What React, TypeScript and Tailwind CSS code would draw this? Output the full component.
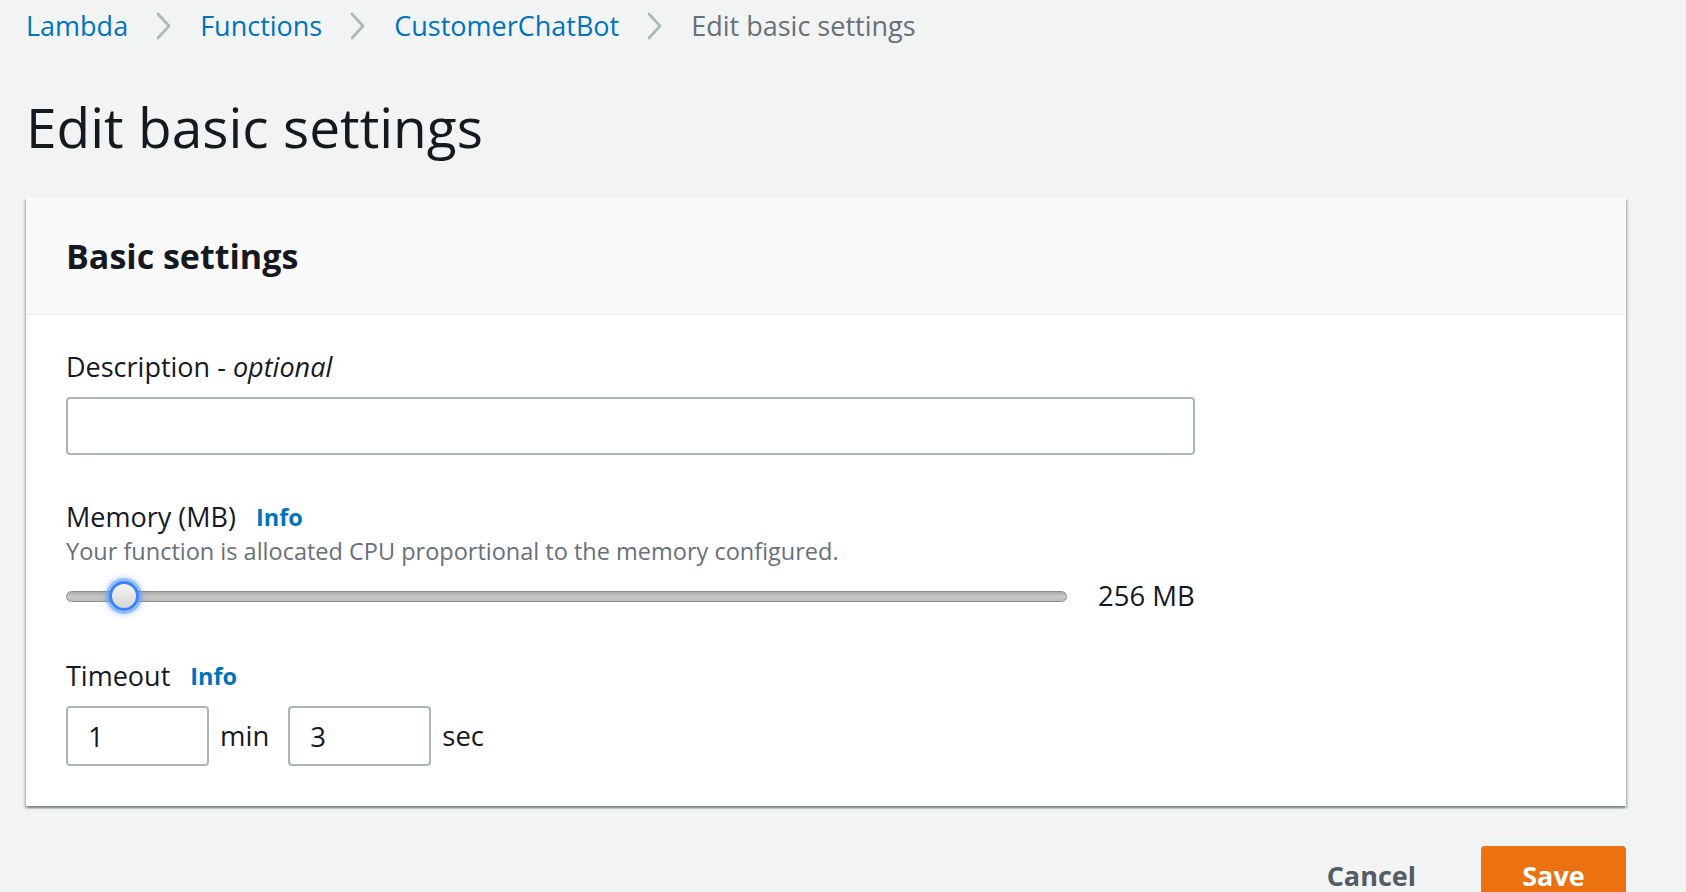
import { useState } from "react";

const font = { fontFamily: '"Open Sans", "Noto Sans", sans-serif' };

function Chevron() {
	return (
		<svg width="16" height="28" viewBox="0 0 16 28" className="mx-[28px] shrink-0">
			<polyline
				points="2,2 13,14 2,26"
				fill="none"
				stroke="#aab7b8"
				strokeWidth="2.6"
				strokeLinecap="round"
				strokeLinejoin="round"
			/>
		</svg>
	);
}

function InfoLink() {
	return <a className="ml-[20px] text-[23.5px] font-bold text-[#0073bb] cursor-pointer">Info</a>;
}

function MemorySlider({ value }: { value: number }) {
	return (
		<div className="flex items-center h-[40px]">
			<div className="relative w-[1001px] h-[40px] flex items-center">
				{/* Track */}
				<div className="w-full h-[11px] rounded-full border border-[#8e8e8e] bg-gradient-to-b from-[#a9a9a9] via-[#c9c9c9] to-[#bdbdbd]" />
				{/* Thumb */}
				<div className="absolute left-[43px] top-[5px] w-[30px] h-[30px] rounded-full border-[3px] border-[#3b82f6] bg-gradient-to-b from-[#f4f4f4] to-[#d6d6d6] shadow-[0_0_0_3px_rgba(96,165,250,0.55),0_0_7px_3px_rgba(59,130,246,0.4)]" />
			</div>
			<span className="ml-[31px] text-[27.5px] text-[#16191f]">{value} MB</span>
		</div>
	);
}

export default function App() {
	const [description, setDescription] = useState("");
	const [minutes, setMinutes] = useState("1");
	const [seconds, setSeconds] = useState("3");

	return (
		<div className="min-h-[892px] bg-[#f2f3f3] pl-[26px] pr-[60px] overflow-hidden" style={font}>
			{/* Breadcrumbs */}
			<nav className="flex items-center h-[52px] text-[27px]">
				<a className="text-[#0073bb]">Lambda</a>
				<Chevron />
				<a className="text-[#0073bb]">Functions</a>
				<Chevron />
				<a className="text-[#0073bb]">CustomerChatBot</a>
				<Chevron />
				<span className="text-[#687078]">Edit basic settings</span>
			</nav>

			<h1 className="mt-[44px] mb-[40px] text-[55px] leading-[62px] text-[#16191f]">Edit basic settings</h1>

			{/* Card */}
			<div className="bg-white shadow-[0_2px_2px_0_rgba(0,28,36,0.35),2px_2px_2px_0_rgba(0,28,36,0.15),-2px_2px_2px_0_rgba(0,28,36,0.15)]">
				<div className="h-[117px] flex items-center px-[40px] bg-[#fafafa] border-b border-[#eaeded]">
					<h2 className="text-[34px] font-bold text-[#16191f]">Basic settings</h2>
				</div>

				<div className="px-[40px] pt-[34px] pb-[40px]">
					{/* Description */}
					<label className="block text-[27px] leading-[36px] text-[#16191f]">
						Description - <i>optional</i>
					</label>
					<input
						value={description}
						onChange={(e) => setDescription(e.target.value)}
						className="mt-[12px] block w-[1129px] h-[58px] rounded-[4px] border-2 border-[#aab7b8] bg-white px-[20px] text-[27px] outline-none"
					/>

					{/* Memory */}
					<div className="mt-[44px] flex items-center text-[27px] leading-[36px] text-[#16191f]">
						Memory (MB)
						<InfoLink />
					</div>
					<p className="text-[23.5px] leading-[32px] text-[#687078]">
						Your function is allocated CPU proportional to the memory configured.
					</p>
					<div className="mt-[9px]">
						<MemorySlider value={256} />
					</div>

					{/* Timeout */}
					<div className="mt-[42px] flex items-center text-[27px] leading-[36px] text-[#16191f]">
						Timeout
						<InfoLink />
					</div>
					<div className="mt-[12px] flex items-center text-[27.5px] text-[#16191f]">
						<input
							value={minutes}
							onChange={(e) => setMinutes(e.target.value)}
							className="w-[143px] h-[60px] rounded-[4px] border-2 border-[#aab7b8] px-[20px] outline-none"
						/>
						<span className="ml-[11px] mr-[19px]">min</span>
						<input
							value={seconds}
							onChange={(e) => setSeconds(e.target.value)}
							className="w-[143px] h-[60px] rounded-[4px] border-2 border-[#aab7b8] px-[20px] outline-none"
						/>
						<span className="ml-[11px]">sec</span>
					</div>
				</div>
			</div>

			{/* Actions */}
			<div className="mt-[40px] flex justify-end items-center">
				<button className="h-[60px] px-[37px] mr-[28px] text-[27px] font-bold text-[#545b64]">Cancel</button>
				<button className="h-[60px] w-[145px] rounded-[4px] bg-[#ec7211] text-[27px] font-bold text-white">Save</button>
			</div>
		</div>
	);
}
